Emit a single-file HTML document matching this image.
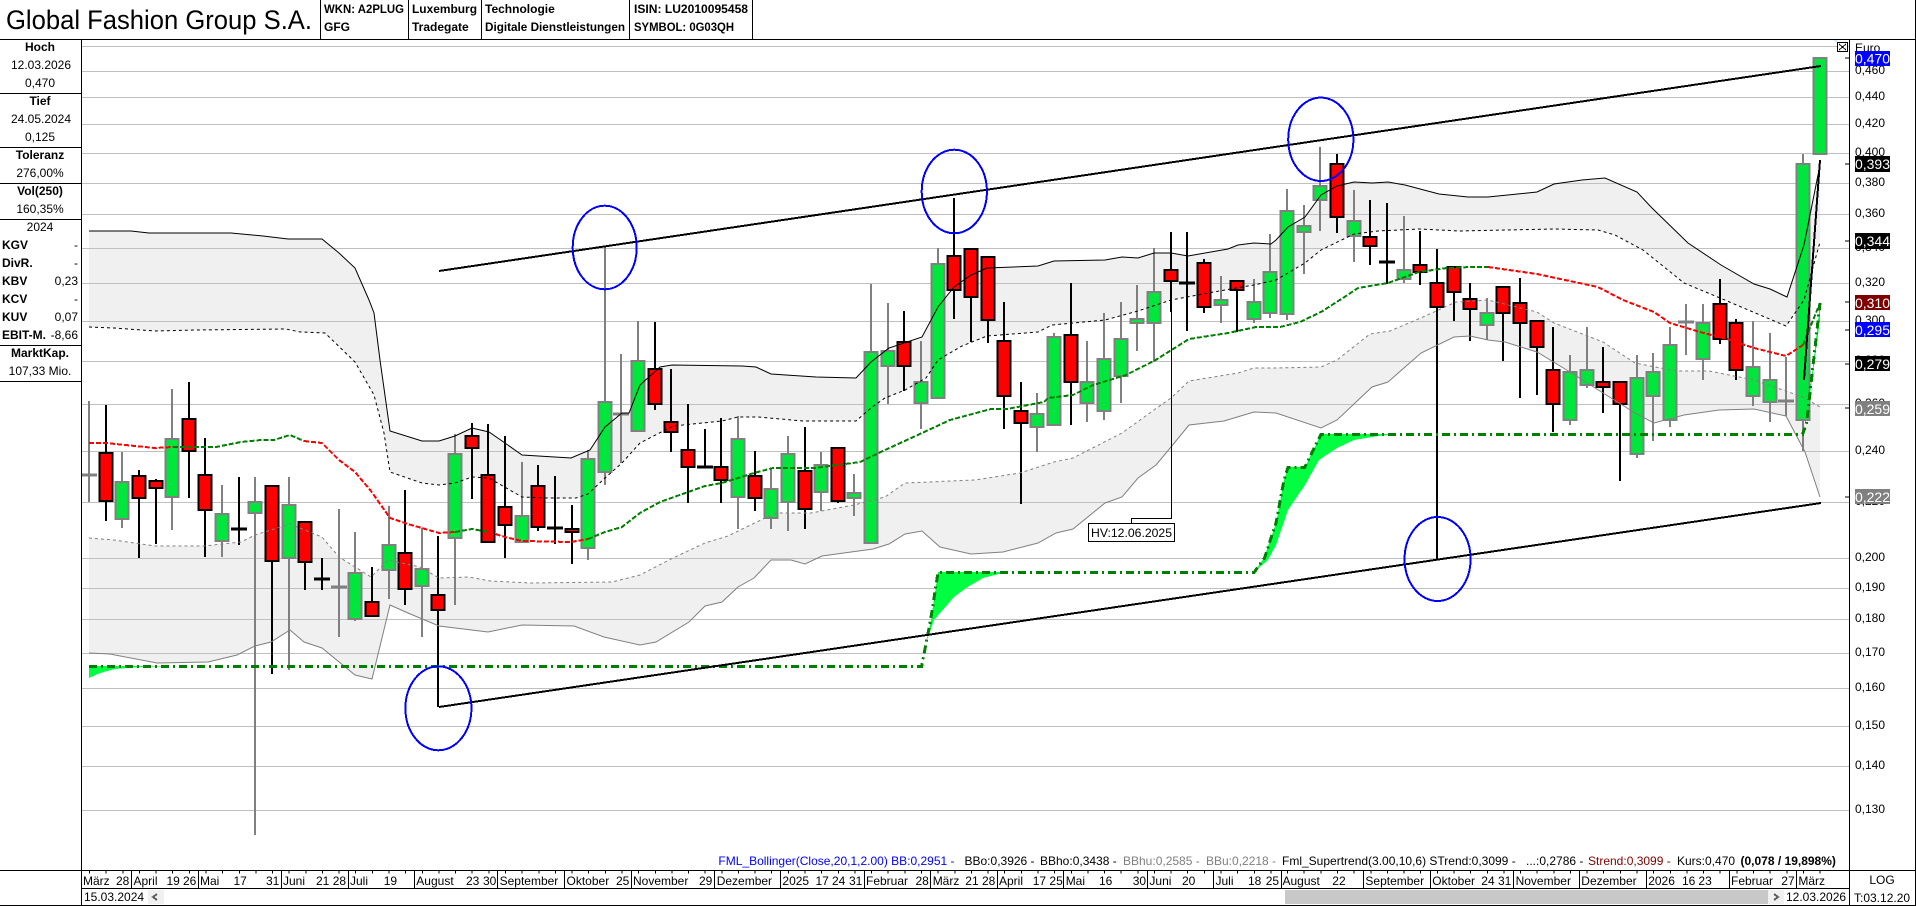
<!DOCTYPE html>
<html lang="de"><head><meta charset="utf-8"><title>Global Fashion Group S.A.</title>
<style>
html,body{margin:0;padding:0;background:#fff;width:1916px;height:906px;overflow:hidden}
svg{display:block;position:absolute;left:0;top:0}
text{font-family:"Liberation Sans",Arial,sans-serif;font-size:12px;fill:#000}
.b{font-weight:700}.m{text-anchor:middle}.r{text-anchor:end}
.t text{font-size:14px;fill:#fff;text-anchor:middle}
</style></head><body>
<svg xmlns="http://www.w3.org/2000/svg" width="1916" height="906" viewBox="0 0 1916 906">
<rect width="1916" height="906" fill="#fff"/>
<g shape-rendering="crispEdges">
<!-- Bollinger fills (painter's order) -->
<path fill="#f0f0f0" d="M89 231L131 231L149 233L231 233L263 236L288 239L322 239L339 253L355 268L369 300L374 313L380 360L390 431L422 441L439 441L455 436L472 428L489 432L505 443L522 455L571 458L590 450L605 427L622 413L629 413L640 385L660 367L672 365L742 366L756 367L771 374L801 376L816 377L856 378L871 362L889 348L922 337L938 307L954 287L971 275L987 268L1038 266L1054 261L1105 260L1122 257L1138 258L1154 253L1171 253L1188 256L1228 249L1238 245L1254 243L1271 244L1276 240L1288 227L1305 217L1321 195L1337 186L1354 182L1372 183L1388 182L1405 185L1439 194L1468 197L1488 197L1537 192L1554 184L1582 180L1605 178L1637 192L1652 208L1688 243L1721 265L1754 284L1770 289L1787 297L1804 245L1820 165V860H89Z"/>
<path fill="#fff" d="M89 327L114 328L155 331L196 330L286 329L300 332L325 333L355 362L374 395L384 433L390 472L422 483L439 485L455 483L472 477L489 478L522 497L547 498L576 498L588 494L605 478L622 463L640 443L673 426L722 421L738 417L758 417L803 421L856 421L871 408L885 398L905 390L926 378L938 360L962 346L987 336L1038 332L1052 325L1105 320L1138 311L1171 300L1203 294L1236 288L1254 285L1276 280L1305 263L1321 250L1354 234L1378 231L1419 229L1460 231L1554 229L1598 230L1615 235L1643 250L1684 283L1720 298L1786 326L1804 300L1820 242V860H89Z"/>
<path fill="#f0f0f0" d="M89 538L114 540L155 546L204 546L241 542L255 535L290 524L322 537L339 557L371 577L388 560L420 567L439 578L469 577L490 581L531 583L612 582L640 575L673 558L705 543L728 536L767 517L777 513L811 513L854 505L885 497L905 483L975 480L1020 473L1054 462L1073 458L1122 433L1154 410L1171 398L1189 381L1238 373L1254 368L1276 368L1321 367L1337 360L1370 334L1390 331L1423 317L1456 302L1488 300L1537 312L1554 323L1603 342L1635 363L1676 371L1709 371L1754 380L1803 397L1820 407V860H89Z"/>
<path fill="#fff" d="M89 653L110 654L157 663L208 662L237 655L255 646L271 642L290 630L304 642L322 648L355 675L372 679L390 605L408 613L439 626L488 632L522 625L574 626L604 637L640 645L656 642L689 622L705 606L722 602L738 587L754 578L771 560L791 560L805 564L822 556L873 549L889 544L905 534L922 531L940 547L971 554L1003 552L1038 543L1056 533L1073 529L1105 503L1122 497L1138 478L1156 465L1171 447L1189 425L1224 421L1254 412L1276 413L1321 428L1337 420L1372 387L1388 382L1421 353L1454 337L1470 336L1488 340L1505 342L1537 352L1570 372L1603 393L1635 413L1654 423L1684 415L1719 410L1754 409L1786 416L1805 452L1820 497V860H89Z"/>
<!-- grid -->
<path fill="none" stroke="#c0c0c0" stroke-width="1" d="M82 46.5H1849M82 71.5H1849M82 97.5H1849M82 124.5H1849M82 153.5H1849M82 183.5H1849M82 214.5H1849M82 248.5H1849M82 283.5H1849M82 321.5H1849M82 361.5H1849M82 404.5H1849M82 451.5H1849M82 502.5H1849M82 558.5H1849M82 588.5H1849M82 619.5H1849M82 653.5H1849M82 688.5H1849M82 726.5H1849M82 766.5H1849M82 810.5H1849"/>
<!-- wicks -->
<path fill="none" stroke="#808080" stroke-width="2" d="M89 401V502M122 452V528M172 389V530M222 485V557M255 477V835M289 477V670M339 509V637M355 532V621M389 506V599M422 528V637M455 434V605M522 462V543M588 450V560M605 247V485M621 354V463M638 321V431M738 416V529M771 468V529M788 436V531M821 452V511M854 474V516M871 284V544M888 303V404M921 341V429M938 248V399M1037 393V452M1054 333V426M1087 341V422M1104 313V420M1121 302V403M1137 285V351M1154 248V362M1221 276V323M1254 279V323M1270 234V318M1287 189V320M1304 205V274M1320 147V231M1354 190V262M1404 216V283M1487 298V340M1570 355V425M1587 327V388M1637 355V458M1653 353V441M1670 327V427M1686 304V355M1703 304V380M1753 321V406M1770 333V422M1786 357V416M1803 154V451"/>
<path fill="none" stroke="#000" stroke-width="2" d="M106 405V521M139 470V558M156 479V544M189 382V498M205 438V557M239 477V545M272 486V674M305 522V590M322 558V590M372 567V617M405 490V605M438 536V707M472 423V499M488 424V543M505 436V558M538 465V531M555 476V544M572 505V564M655 322V410M671 369V452M688 404V503M705 429V468M721 418V503M755 451V511M805 427V529M838 448V503M904 311V391M954 198V319M971 249V342M988 257V343M1004 302V429M1021 382V504M1071 283V425M1171 232V312M1187 232V331M1204 259V313M1237 281V332M1337 154V233M1370 200V265M1387 203V284M1420 231V285M1437 249V559M1454 267V321M1470 283V341M1503 287V361M1520 278V398M1537 321V395M1553 327V432M1603 347V413M1620 382V481M1720 279V344M1736 319V380"/>
<!-- dojis -->
<path fill="none" stroke="#808080" stroke-width="3" d="M81 475h16M331 587h16M613 414h16M1678 322h16M1778 401h16"/>
<path fill="none" stroke="#000" stroke-width="3" d="M231 529h16M314 579h16M547 528h16M697 467h16M1179 283h16M1379 262h16"/>
<!-- green bodies -->
<path fill="#00e63c" stroke="#808080" stroke-width="2" d="M115.5 482h13V519h-13zM165.5 439h13V497h-13zM215.5 514h13V541h-13zM248.5 502h13V513h-13zM282.5 505h13V558h-13zM348.5 573h13V619h-13zM382.5 545h13V570h-13zM415.5 569h13V586h-13zM448.5 454h13V538h-13zM515.5 516h13V542h-13zM581.5 459h13V548h-13zM598.5 402h13V472h-13zM631.5 361h13V431h-13zM731.5 439h13V497h-13zM764.5 489h13V518h-13zM781.5 454h13V502h-13zM814.5 465h13V492h-13zM847.5 493h13V498h-13zM864.5 352h13V543h-13zM881.5 351h13V366h-13zM914.5 382h13V403h-13zM931.5 264h13V398h-13zM1030.5 414h13V427h-13zM1047.5 337h13V425h-13zM1080.5 382h13V403h-13zM1097.5 359h13V411h-13zM1114.5 339h13V376h-13zM1130.5 319h13V323h-13zM1147.5 292h13V323h-13zM1214.5 300h13V305h-13zM1247.5 302h13V319h-13zM1263.5 272h13V313h-13zM1280.5 211h13V314h-13zM1297.5 226h13V232h-13zM1313.5 186h13V200h-13zM1347.5 221h13V236h-13zM1397.5 270h13V279h-13zM1480.5 313h13V325h-13zM1563.5 372h13V420h-13zM1580.5 370h13V385h-13zM1630.5 378h13V454h-13zM1646.5 372h13V396h-13zM1663.5 345h13V420h-13zM1696.5 323h13V359h-13zM1746.5 367h13V396h-13zM1763.5 380h13V402h-13zM1796.5 164h13V420h-13zM1813.5 58h13V154h-13z"/>
<!-- red bodies -->
<path fill="#ff0000" stroke="#000" stroke-width="2" d="M99.5 453h13V501h-13zM132.5 476h13V498h-13zM149.5 481h13V488h-13zM182.5 419h13V451h-13zM198.5 475h13V510h-13zM265.5 486h13V561h-13zM298.5 522h13V562h-13zM365.5 602h13V616h-13zM398.5 553h13V589h-13zM431.5 595h13V610h-13zM465.5 436h13V448h-13zM481.5 475h13V542h-13zM498.5 507h13V525h-13zM531.5 486h13V527h-13zM565.5 529h13V532h-13zM648.5 369h13V404h-13zM664.5 422h13V432h-13zM681.5 450h13V467h-13zM714.5 467h13V480h-13zM748.5 476h13V498h-13zM798.5 471h13V509h-13zM831.5 448h13V501h-13zM897.5 342h13V366h-13zM947.5 256h13V290h-13zM964.5 249h13V297h-13zM981.5 257h13V320h-13zM997.5 341h13V396h-13zM1014.5 411h13V423h-13zM1064.5 335h13V382h-13zM1164.5 270h13V281h-13zM1197.5 263h13V307h-13zM1230.5 281h13V290h-13zM1330.5 164h13V217h-13zM1363.5 237h13V246h-13zM1413.5 265h13V272h-13zM1430.5 283h13V307h-13zM1447.5 267h13V292h-13zM1463.5 299h13V309h-13zM1496.5 287h13V313h-13zM1513.5 303h13V323h-13zM1530.5 321h13V347h-13zM1546.5 370h13V404h-13zM1596.5 382h13V387h-13zM1613.5 382h13V404h-13zM1713.5 304h13V339h-13zM1729.5 323h13V370h-13z"/>
</g>
<!-- band lines -->
<g shape-rendering="geometricPrecision">
<path fill="none" stroke="#000" stroke-width="1" d="M89 231L131 231L149 233L231 233L263 236L288 239L322 239L339 253L355 268L369 300L374 313L380 360L390 431L422 441L439 441L455 436L472 428L489 432L505 443L522 455L571 458L590 450L605 427L622 413L629 413L640 385L660 367L672 365L742 366L756 367L771 374L801 376L816 377L856 378L871 362L889 348L922 337L938 307L954 287L971 275L987 268L1038 266L1054 261L1105 260L1122 257L1138 258L1154 253L1171 253L1188 256L1228 249L1238 245L1254 243L1271 244L1276 240L1288 227L1305 217L1321 195L1337 186L1354 182L1372 183L1388 182L1405 185L1439 194L1468 197L1488 197L1537 192L1554 184L1582 180L1605 178L1637 192L1652 208L1688 243L1721 265L1754 284L1770 289L1787 297L1804 245L1820 165"/>
<path fill="none" stroke="#000" stroke-width="1" stroke-dasharray="3 3" d="M89 327L114 328L155 331L196 330L286 329L300 332L325 333L355 362L374 395L384 433L390 472L422 483L439 485L455 483L472 477L489 478L522 497L547 498L576 498L588 494L605 478L622 463L640 443L673 426L722 421L738 417L758 417L803 421L856 421L871 408L885 398L905 390L926 378L938 360L962 346L987 336L1038 332L1052 325L1105 320L1138 311L1171 300L1203 294L1236 288L1254 285L1276 280L1305 263L1321 250L1354 234L1378 231L1419 229L1460 231L1554 229L1598 230L1615 235L1643 250L1684 283L1720 298L1786 326L1804 300L1820 242"/>
<path fill="none" stroke="#808080" stroke-width="1" stroke-dasharray="3 3" d="M89 538L114 540L155 546L204 546L241 542L255 535L290 524L322 537L339 557L371 577L388 560L420 567L439 578L469 577L490 581L531 583L612 582L640 575L673 558L705 543L728 536L767 517L777 513L811 513L854 505L885 497L905 483L975 480L1020 473L1054 462L1073 458L1122 433L1154 410L1171 398L1189 381L1238 373L1254 368L1276 368L1321 367L1337 360L1370 334L1390 331L1423 317L1456 302L1488 300L1537 312L1554 323L1603 342L1635 363L1676 371L1709 371L1754 380L1803 397L1820 407"/>
<path fill="none" stroke="#808080" stroke-width="1" d="M89 653L110 654L157 663L208 662L237 655L255 646L271 642L290 630L304 642L322 648L355 675L372 679L390 605L408 613L439 626L488 632L522 625L574 626L604 637L640 645L656 642L689 622L705 606L722 602L738 587L754 578L771 560L791 560L805 564L822 556L873 549L889 544L905 534L922 531L940 547L971 554L1003 552L1038 543L1056 533L1073 529L1105 503L1122 497L1138 478L1156 465L1171 447L1189 425L1224 421L1254 412L1276 413L1321 428L1337 420L1372 387L1388 382L1421 353L1454 337L1470 336L1488 340L1505 342L1537 352L1570 372L1603 393L1635 413L1654 423L1684 415L1719 410L1754 409L1786 416L1805 452L1820 497"/>
</g>
<g shape-rendering="crispEdges">
<!-- middle band, red/green -->
<g fill="none" stroke-width="2" stroke-dasharray="5 2">
<path stroke="#ff0000" d="M89 443L106 443L135 446L155 448L173 447M304 441L322 443L339 460L355 472L371 491L390 518L408 524L439 533L455 532M489 532L505 537L522 541L571 542L588 539M1488 267L1537 274L1598 287L1623 300L1654 312L1670 323L1700 332L1727 339L1754 348L1786 356L1803 345"/>
<path stroke="#008000" d="M173 447L216 447L241 442L261 440L274 440L290 435L304 441M455 532L472 529L489 532M588 539L605 532L622 527L640 513L660 502L705 486L722 483L754 473L773 468L799 468L815 468L860 462L885 450L922 433L950 420L991 409L1007 409L1044 402L1048 398L1073 395L1093 385L1126 375L1154 361L1189 339L1228 333L1256 327L1280 327L1300 322L1321 312L1343 298L1358 288L1388 283L1419 272L1447 268L1472 267L1488 267M1803 345L1820 303"/>
</g>
<!-- supertrend fills -->
<path fill="#00ff40" d="M89 666L89 678L100 673L115 669L140 667L175 666ZM921 666L931 620L938 572L1007 572L983 578L966 588L954 597L934 620L926 643ZM1254 572L1264 558L1276 523L1284 480L1288 467L1305 467L1321 434L1398 434L1378 436L1354 440L1337 448L1319 460L1305 485L1288 510L1276 545L1268 560ZM1806 423L1814 357L1820 303L1820 320L1810 395Z"/>
<path fill="none" stroke="#008000" stroke-width="3" stroke-dasharray="8 4 2 4" d="M89 666.5H921.6L930.6 620L938 572.5H1254L1264.5 558L1276 523L1284 480L1288 467.5H1304.6L1321 434.5H1802.5L1806.6 423L1814 357L1820 303"/>
<!-- trend lines -->
<path fill="none" stroke="#000" stroke-width="2" d="M439 271L1821 66M439 707L1821 503M1804 380L1820 160"/>
<!-- ellipses -->
<g fill="none" stroke="#0000ff" stroke-width="2">
<ellipse cx="604.7" cy="247.5" rx="32" ry="41.8"/>
<ellipse cx="954.3" cy="191.5" rx="32.6" ry="41.8"/>
<ellipse cx="1320.8" cy="139.3" rx="32.6" ry="41.7"/>
<ellipse cx="438.4" cy="708.3" rx="33" ry="42"/>
<ellipse cx="1437.6" cy="559" rx="33" ry="42"/>
</g>
<!-- HV -->
<path fill="none" stroke="#000" stroke-width="1" d="M1171.5 312V518.5H1131.5V523"/>
<rect x="1088.5" y="523.5" width="86" height="18" fill="#fff" stroke="#000"/>
<!-- chrome lines -->
<path fill="none" stroke="#000" stroke-width="1" d="M0 39.5H1916M320.5 0V39M408.5 0V39M481.5 0V39M629.5 0V39M752.5 0V39M81.5 39V905M1849.5 39V905M1915.5 0V906M0 93.5H81M0 147.5H81M0 183.5H81M0 219.5H81M0 345.5H81M0 381.5H81M0 870.5H1916M81 888.5H1849M0 905.5H1916M131.5 870V888M198.5 870V888M281.5 870V888M348.5 870V888M414.5 870V888M497.5 870V888M564.5 870V888M631.5 870V888M714.5 870V888M780.5 870V888M864.5 870V888M930.5 870V888M997.5 870V888M1063.5 870V888M1147.5 870V888M1213.5 870V888M1281.5 870V888M1363.5 870V888M1430.5 870V888M1513.5 870V888M1579.5 870V888M1646.5 870V888M1729.5 870V888M1796.5 870V888M1845 58H1849M1845 164H1849M1845 241H1849M1845 302H1849M1845 330H1849M1845 364H1849M1845 408H1849M1845 497H1849"/>
<line x1="89" y1="872" x2="1830" y2="872" stroke="#000" stroke-width="3" stroke-dasharray="1 15.64"/>
<!-- scrollbar -->
<rect x="148" y="890" width="16" height="14" fill="#f0f0f0"/>
<rect x="1285" y="890" width="483" height="14" fill="#c8c8c8"/>
<rect x="1768" y="890" width="16" height="14" fill="#f0f0f0"/>
<path fill="none" stroke="#606060" stroke-width="2" d="M157 894L153 897L157 900M1774 894L1778 897L1774 900"/>
</g>
<!-- price axis labels (under the tags) -->
<g>
<text x="1855" y="52">Euro</text>
<text x="1855" y="74">0,460</text><text x="1855" y="100">0,440</text><text x="1855" y="127">0,420</text><text x="1855" y="156">0,400</text><text x="1855" y="186">0,380</text><text x="1855" y="217">0,360</text><text x="1855" y="251">0,340</text><text x="1855" y="286">0,320</text><text x="1855" y="324">0,300</text><text x="1855" y="364">0,280</text><text x="1855" y="407">0,260</text><text x="1855" y="454">0,240</text><text x="1855" y="505">0,220</text><text x="1855" y="561">0,200</text><text x="1855" y="591">0,190</text><text x="1855" y="622">0,180</text><text x="1855" y="656">0,170</text><text x="1855" y="691">0,160</text><text x="1855" y="729">0,150</text><text x="1855" y="769">0,140</text><text x="1855" y="813">0,130</text>
</g>
<g shape-rendering="crispEdges">
<!-- axis tags -->
<rect x="1855" y="51" width="35" height="15" fill="#0000ff"/>
<rect x="1855" y="156" width="35" height="16" fill="#000"/>
<rect x="1855" y="233" width="35" height="16" fill="#000"/>
<rect x="1855" y="295" width="35" height="15" fill="#800000"/>
<rect x="1855" y="322" width="35" height="15" fill="#0000ff"/>
<rect x="1855" y="356" width="35" height="15" fill="#000"/>
<rect x="1855" y="401" width="35" height="15" fill="#808080"/>
<rect x="1855" y="489" width="35" height="15" fill="#808080"/>
<!-- close box -->
<path fill="#cfe8f8" d="M1833 40H1837V43Z"/>
<rect x="1837.5" y="42.5" width="10" height="9" fill="#fff" stroke="#000"/>
<path fill="none" stroke="#000" d="M1839 44L1846 50M1846 44L1839 50"/>
</g>
<!-- header -->
<text x="6" y="29" style="font-size:27px" textLength="306" lengthAdjust="spacingAndGlyphs">Global Fashion Group S.A.</text>
<g class="b">
<text x="324" y="13" textLength="80" lengthAdjust="spacingAndGlyphs">WKN: A2PLUG</text>
<text x="324" y="31">GFG</text>
<text x="412" y="13" textLength="65" lengthAdjust="spacingAndGlyphs">Luxemburg</text>
<text x="412" y="31">Tradegate</text>
<text x="485" y="13">Technologie</text>
<text x="485" y="31" textLength="140" lengthAdjust="spacingAndGlyphs">Digitale Dienstleistungen</text>
<text x="634" y="13" textLength="114" lengthAdjust="spacingAndGlyphs">ISIN: LU2010095458</text>
<text x="634" y="31" textLength="100" lengthAdjust="spacingAndGlyphs">SYMBOL: 0G03QH</text>
</g>
<!-- left panel -->
<g class="m">
<text x="40" y="51" class="b">Hoch</text><text x="41" y="69">12.03.2026</text><text x="40" y="87">0,470</text>
<text x="40" y="105" class="b">Tief</text><text x="41" y="123">24.05.2024</text><text x="40" y="141">0,125</text>
<text x="40" y="159" class="b">Toleranz</text><text x="40" y="177">276,00%</text>
<text x="40" y="195" class="b">Vol(250)</text><text x="40" y="213">160,35%</text>
<text x="40" y="231">2024</text>
<text x="40" y="357" class="b">MarktKap.</text><text x="40" y="375">107,33 Mio.</text>
</g>
<g class="b">
<text x="2" y="249">KGV</text><text x="2" y="267">DivR.</text><text x="2" y="285">KBV</text><text x="2" y="303">KCV</text><text x="2" y="321">KUV</text><text x="2" y="339">EBIT-M.</text>
</g>
<g class="r">
<text x="78" y="249">-</text><text x="78" y="267">-</text><text x="78" y="285">0,23</text><text x="78" y="303">-</text><text x="78" y="321">0,07</text><text x="78" y="339">-8,66</text>
</g>
<!-- HV label -->
<text x="1091" y="537" textLength="81" lengthAdjust="spacingAndGlyphs">HV:12.06.2025</text>
<g class="t">
<text x="1872.5" y="63.5">0,470</text>
<text x="1872.5" y="169">0,393</text>
<text x="1872.5" y="246">0,344</text>
<text x="1872.5" y="308">0,310</text>
<text x="1872.5" y="335">0,295</text>
<text x="1872.5" y="369">0,279</text>
<text x="1872.5" y="414">0,259</text>
<text x="1872.5" y="502">0,222</text>
</g>
<!-- legend -->
<g>
<text x="718.4" y="865" style="fill:#0000ff">FML_Bollinger(Close,20,1,2.00) BB:0,2951 -</text>
<text x="964.5" y="865">BBo:0,3926 -</text>
<text x="1040" y="865">BBho:0,3438 -</text>
<text x="1123" y="865" style="fill:#808080">BBhu:0,2585 -</text>
<text x="1206" y="865" style="fill:#808080">BBu:0,2218 -</text>
<text x="1282" y="865">Fml_Supertrend(3.00,10,6) STrend:0,3099 -</text>
<text x="1526" y="865">...:0,2786 -</text>
<text x="1588" y="865" style="fill:#800000">Strend:0,3099 -</text>
<text x="1677" y="865">Kurs:0,470</text>
<text x="1740.5" y="865" class="b">(0,078 / 19,898%)</text>
</g>
<!-- date axis -->
<g>
<text x="83" y="885">März</text><text x="116" y="885">28</text><text x="133.5" y="885">April</text><text x="166.5" y="885">19</text><text x="183" y="885">26</text><text x="200" y="885">Mai</text><text x="233.5" y="885">17</text><text x="266" y="885">31</text><text x="283" y="885">Juni</text><text x="316" y="885">21</text><text x="332.7" y="885">28</text><text x="350" y="885">Juli</text><text x="383.7" y="885">19</text><text x="416.3" y="885">August</text><text x="466" y="885">23</text><text x="483" y="885">30</text><text x="499.6" y="885">September</text><text x="566.5" y="885">Oktober</text><text x="616" y="885">25</text><text x="633" y="885">November</text><text x="699" y="885">29</text><text x="716.7" y="885">Dezember</text><text x="782.4" y="885">2025</text><text x="815.5" y="885">17</text><text x="832" y="885">24</text><text x="849" y="885">31</text><text x="866" y="885">Februar</text><text x="915.5" y="885">28</text><text x="932.7" y="885">März</text><text x="965.3" y="885">21</text><text x="982" y="885">28</text><text x="999" y="885">April</text><text x="1032.7" y="885">17</text><text x="1049.4" y="885">25</text><text x="1065.7" y="885">Mai</text><text x="1099" y="885">16</text><text x="1132.7" y="885">30</text><text x="1149.4" y="885">Juni</text><text x="1182" y="885">20</text><text x="1215.5" y="885">Juli</text><text x="1248" y="885">18</text><text x="1265.7" y="885">25</text><text x="1282.5" y="885">August</text><text x="1332.3" y="885">22</text><text x="1365.4" y="885">September</text><text x="1432.3" y="885">Oktober</text><text x="1481.3" y="885">24</text><text x="1498" y="885">31</text><text x="1515.6" y="885">November</text><text x="1581.3" y="885">Dezember</text><text x="1648.2" y="885">2026</text><text x="1682" y="885">16</text><text x="1698.4" y="885">23</text><text x="1731" y="885">Februar</text><text x="1781.3" y="885">27</text><text x="1798.4" y="885">März</text>
</g>
<text x="84" y="901">15.03.2024</text>
<text x="1786" y="901">12.03.2026</text>
<text x="1882" y="884" class="m">LOG</text>
<text x="1854" y="902">T:03.12.20</text>
</svg>
</body></html>
